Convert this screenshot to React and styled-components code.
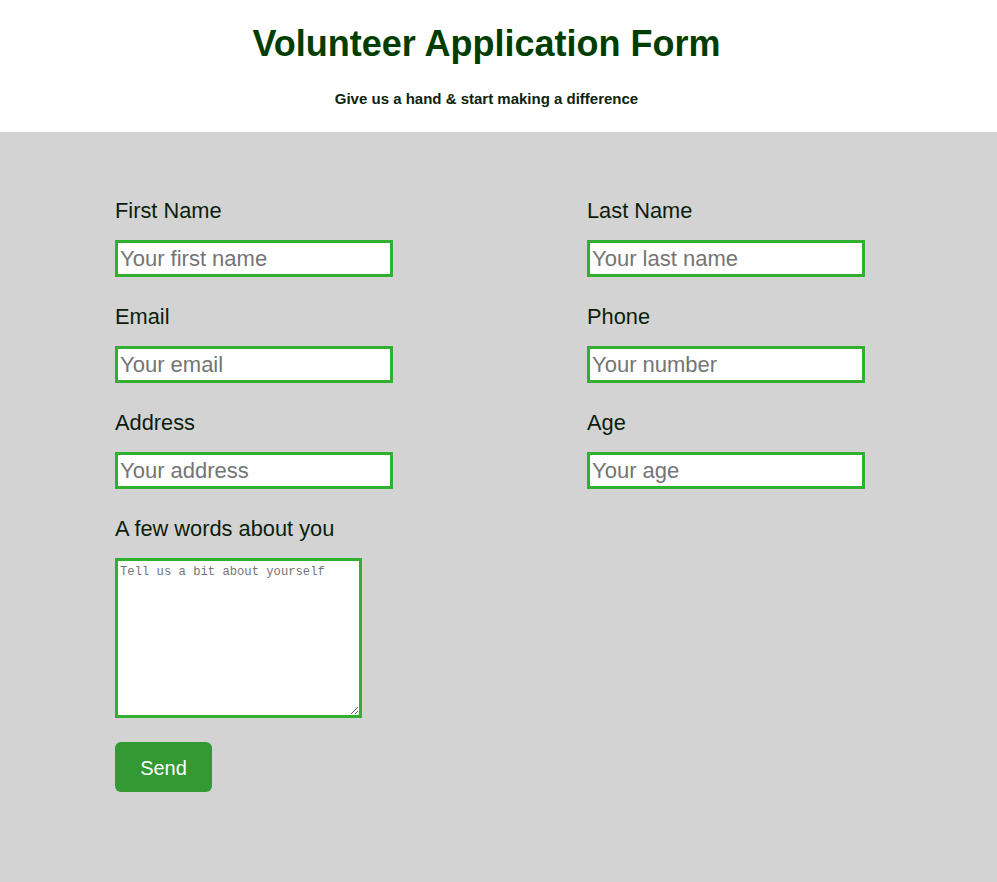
import React from "react";
import styled, { createGlobalStyle } from "styled-components";

const GlobalStyle = createGlobalStyle`
  html, body {
    margin: 0;
    padding: 0;
    background: #d3d3d3;
  }
  body {
    font-family: "Liberation Sans", Arial, sans-serif;
  }
`;

const Styled = {
  Page: styled.div`
    min-height: 882px;
    background: #d3d3d3;
  `,
  Header: styled.header`
    height: 132px;
    box-sizing: border-box;
    background: #ffffff;
    padding: 24px 24px 0 0;
    text-align: center;
  `,
  Title: styled.h1`
    margin: 0;
    font-size: 36px;
    line-height: 40px;
    font-weight: bold;
    color: #003d00;
  `,
  Subtitle: styled.p`
    margin: 26px 0 0;
    font-size: 15px;
    line-height: 17px;
    font-weight: bold;
    color: #0c230c;
  `,
  Form: styled.form`
    padding: 67px 0 40px 115px;
  `,
  Grid: styled.div`
    display: grid;
    grid-template-columns: 472px 278px;
    row-gap: 28px;
  `,
  Field: styled.div`
    display: flex;
    flex-direction: column;
    align-items: flex-start;
  `,
  Label: styled.label`
    display: block;
    font-size: 21.8px;
    line-height: 23px;
    margin-bottom: 18px;
    color: #0b1e0b;
    white-space: nowrap;
  `,
  Input: styled.input`
    box-sizing: border-box;
    width: 278px;
    height: 37px;
    margin: 0;
    padding: 1px 2px;
    border: 3px solid #2fb12f;
    background: #ffffff;
    font-family: "Liberation Sans", Arial, sans-serif;
    font-size: 22px;
    color: #222;
    outline: none;
    &::placeholder {
      color: #757575;
    }
  `,
  TextArea: styled.textarea`
    box-sizing: border-box;
    width: 247px;
    height: 160px;
    margin: 0;
    padding: 4px 2px 2px;
    border: 3px solid #2fb12f;
    background: #ffffff;
    font-family: "Liberation Mono", "DejaVu Sans Mono", monospace;
    font-size: 12.2px;
    outline: none;
    &::placeholder {
      color: #757575;
    }
  `,
  Button: styled.button`
    margin-top: 24px;
    width: 97px;
    height: 50px;
    padding: 2px 0 0;
    border: none;
    border-radius: 6px;
    background: #339933;
    color: #ffffff;
    font-family: "Liberation Sans", Arial, sans-serif;
    font-size: 20px;
    cursor: pointer;
  `,
};

const fields = [
  { id: "first", label: "First Name", placeholder: "Your first name" },
  { id: "last", label: "Last Name", placeholder: "Your last name" },
  { id: "email", label: "Email", placeholder: "Your email" },
  { id: "phone", label: "Phone", placeholder: "Your number" },
  { id: "address", label: "Address", placeholder: "Your address" },
  { id: "age", label: "Age", placeholder: "Your age" },
];

const App = () => {
  return (
    <Styled.Page>
      <GlobalStyle />
      <Styled.Header>
        <Styled.Title>Volunteer Application Form</Styled.Title>
        <Styled.Subtitle>Give us a hand &amp; start making a difference</Styled.Subtitle>
      </Styled.Header>
      <Styled.Form onSubmit={(e) => e.preventDefault()}>
        <Styled.Grid>
          {fields.map((f) => (
            <Styled.Field key={f.id}>
              <Styled.Label htmlFor={f.id}>{f.label}</Styled.Label>
              <Styled.Input id={f.id} placeholder={f.placeholder} />
            </Styled.Field>
          ))}
          <Styled.Field>
            <Styled.Label htmlFor="about">A few words about you</Styled.Label>
            <Styled.TextArea id="about" placeholder="Tell us a bit about yourself" />
            <Styled.Button type="submit">Send</Styled.Button>
          </Styled.Field>
        </Styled.Grid>
      </Styled.Form>
    </Styled.Page>
  );
};

export default App;
